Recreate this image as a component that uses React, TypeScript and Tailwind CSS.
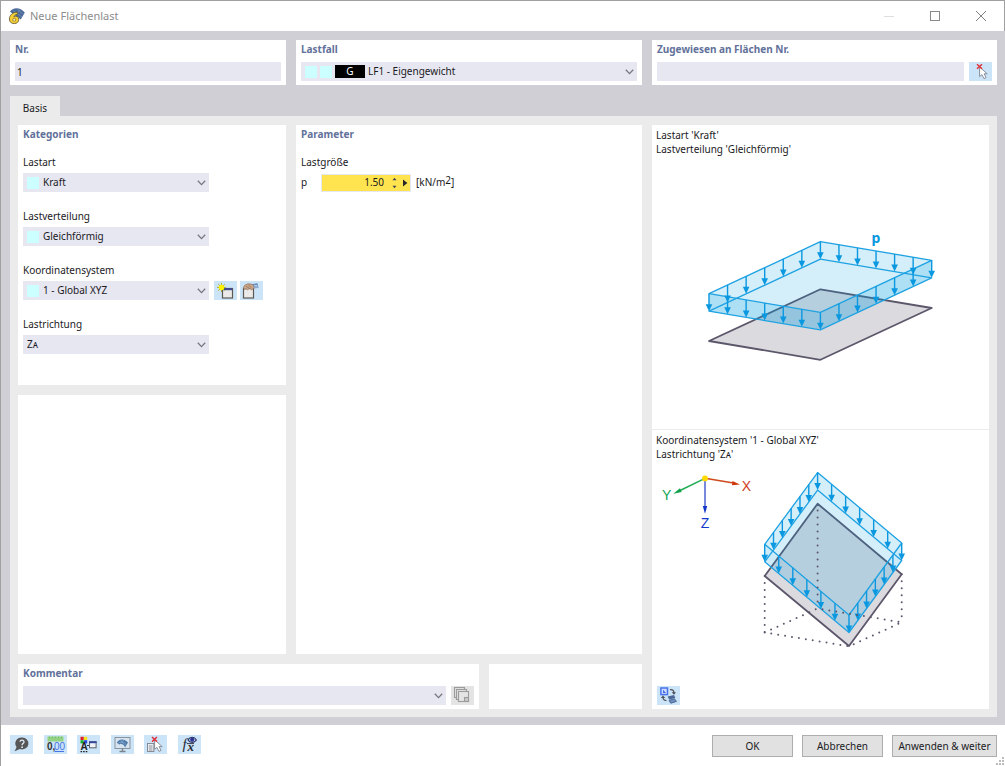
import React, { useState } from 'react';

type Pt = [number, number];

const pts = (list: Pt[]) => list.map((p) => p.join(',')).join(' ');
const down = (p: Pt, by: number): Pt => [p[0], p[1] + by];

function alongEdges(corners: Pt[], steps: number): Pt[] {
  const out: Pt[] = [];
  corners.forEach((a, i) => {
    const b = corners[(i + 1) % corners.length];
    for (let k = 0; k < steps; k++) {
      out.push([a[0] + ((b[0] - a[0]) * k) / steps, a[1] + ((b[1] - a[1]) * k) / steps]);
    }
  });
  return out;
}

function LoadArrow({ at }: { at: Pt }) {
  const [x, y] = at;
  return (
    <g>
      <line x1={x} y1={y} x2={x} y2={y + 12} stroke="#0a98e0" strokeWidth="1.4" />
      <polygon points={pts([[x - 3.3, y + 10.5], [x + 3.3, y + 10.5], [x, y + 17.5]])} fill="#0a98e0" />
    </g>
  );
}

/** Load prism: corners are given in the order left, top, right, front. */
function LoadPrism({ corners, wallOpacity }: { corners: Pt[]; wallOpacity: number }) {
  const h = 17.5;
  const [l, t, r, f] = corners;
  const low = corners.map((c) => down(c, h));
  return (
    <g>
      <polygon points={pts([l, t, r, low[2], low[3], low[0]])} fill="#0099e0" fillOpacity="0.17" />
      <polygon points={pts([l, f, low[3], low[0]])} fill="#0099e0" fillOpacity={wallOpacity} />
      <polygon points={pts([f, r, low[2], low[3]])} fill="#0099e0" fillOpacity={wallOpacity} />
      <g fill="none" stroke="#1ea2e2" strokeWidth="1.3" strokeLinejoin="round">
        <polygon points={pts(corners)} />
        <polygon points={pts(low)} />
      </g>
      {alongEdges(corners, 6).map((p, i) => (
        <LoadArrow key={i} at={p} />
      ))}
    </g>
  );
}

function DistributionDrawing() {
  const load: Pt[] = [[709, 293.7], [820.4, 241.7], [931.7, 260.3], [820.4, 312.3]];
  const plane: Pt[] = [[709, 341], [820.4, 289.3], [931.7, 308], [820.4, 359.8]];
  return (
    <svg width="336" height="273" viewBox="652 156 336 273" role="img" aria-label="Lastverteilung">
      <polygon points={pts(plane)} fill="#dbdadf" stroke="#5d576b" strokeWidth="1.8" strokeLinejoin="round" />
      <LoadPrism corners={load} wallOpacity={0.18} />
      <text x="871.5" y="243" fontSize="14" fontWeight="700" fill="#0a98e0" fontFamily="Noto Sans, sans-serif">p</text>
    </svg>
  );
}

function DirectionDrawing() {
  const load: Pt[] = [[764.7, 544.3], [817.6, 472.6], [901.7, 543], [849, 615]];
  const plane: Pt[] = [[764.7, 576], [817.6, 503.7], [901.7, 574.3], [849, 646]];
  return (
    <svg width="336" height="200" viewBox="652 461 336 200" role="img" aria-label="Lastrichtung">
      <polygon points={pts(plane)} fill="#dbdadf" stroke="#5d576b" strokeWidth="1.8" strokeLinejoin="round" />
      <LoadPrism corners={load} wallOpacity={0.03} />
      <g fill="none" stroke="#5d576b" strokeWidth="2" strokeLinecap="round" strokeDasharray="0 7">
        <path d="M817.6 510.5V607" />
        <path d="M764.7 576V632.5" />
        <path d="M901.7 574.3V622.3" />
        <path d="M764.7 632.5L817.6 608.5L901.7 622.3L849 646.3Z" />
      </g>
      <g strokeWidth="1.5">
        <path d="M705 478.3L735 483.3" stroke="#d0491c" />
        <path d="M705 478.3L678 491.5" stroke="#22aa55" />
        <path d="M705 478.3V508" stroke="#4a62d0" />
      </g>
      <polygon points="740,484.4 732.5,481 732,485.2" fill="#cf3a0c" />
      <polygon points="673.3,493.7 680,488.2 681.6,492" fill="#10a24a" />
      <polygon points="702.8,506 707.2,506 705,513.8" fill="#1035c8" />
      <circle cx="705" cy="478.4" r="2.9" fill="#ffd900" />
      <g fontSize="14" fontFamily="Liberation Sans, sans-serif" textAnchor="middle">
        <text x="746.3" y="490.5" fill="#d0401a">X</text>
        <text x="666.7" y="499.8" fill="#14a552">Y</text>
        <text x="705" y="528" fill="#1338cc">Z</text>
      </g>
    </svg>
  );
}

function Chevron() {
  return (
    <svg width="9" height="6" viewBox="0 0 9 6" className="pointer-events-none absolute top-[7px] right-[3px]" aria-hidden="true">
      <path d="M0.8 0.8L4.5 4.6L8.2 0.8" fill="none" stroke="#77767e" strokeWidth="1.3" />
    </svg>
  );
}

function Swatch() {
  return <span className="size-3 bg-[#ccffff]" />;
}

function Dropdown({ id, options, className, lead, label }: {
  id: string; options: string[]; className: string; lead?: React.ReactNode; label?: string;
}) {
  return (
    <div className="relative min-w-0 flex-1 bg-[#e7e7f1]">
      {lead && <div className="pointer-events-none absolute inset-y-0 left-1 flex items-center gap-[3px]">{lead}</div>}
      <select id={id} aria-label={label} className={'block h-[19px] w-full appearance-none bg-transparent pr-4 leading-[19px] outline-none ' + className}>
        {options.map((o) => (
          <option key={o}>{o}</option>
        ))}
      </select>
      <Chevron />
    </div>
  );
}

function Title({ children, htmlFor }: { children: React.ReactNode; htmlFor?: string }) {
  const cls = 'block leading-[18px] font-bold text-[#62719a]';
  return htmlFor ? <label htmlFor={htmlFor} className={cls}>{children}</label> : <h2 className={cls}>{children}</h2>;
}

function IconButton({ label, children, disabled }: { label: string; children: React.ReactNode; disabled?: boolean }) {
  return (
    <button
      type="button"
      aria-label={label}
      disabled={disabled}
      className="flex h-[19px] w-[23px] shrink-0 items-center justify-center bg-[#cce4f7] disabled:bg-[#e4e4e4]"
    >
      <svg width="23" height="19" viewBox="0 0 23 19" aria-hidden="true">{children}</svg>
    </button>
  );
}

function Cursor() {
  return <path d="M0 0V9.6L2.3 7.6L4.4 11.6L6.5 10.6L4.5 6.8H7.6Z" fill="#fff" stroke="#808590" strokeWidth="0.9" strokeLinejoin="round" />;
}

function RedCross() {
  return <path d="M0 0L5 4.6M5 0L0 4.6" stroke="#e0333c" strokeWidth="1.5" fill="none" />;
}

function SelectIcon() {
  return (
    <>
      <g transform="translate(10.6 5)"><Cursor /></g>
      <g transform="translate(8 2.2)"><RedCross /></g>
    </>
  );
}

function NewIcon() {
  return (
    <>
      <rect x="8.5" y="7.5" width="10" height="9.5" fill="#eceae8" stroke="#5c5a57" strokeWidth="1.2" />
      <rect x="9" y="7.2" width="9.2" height="2" fill="#3d4a94" />
      <path d="M7.5 1.8V11M3 6.4H12M4.2 3.1L10.8 9.7M10.8 3.1L4.2 9.7" stroke="#a9a920" strokeWidth="0.9" />
      <circle cx="7.5" cy="6.4" r="2.7" fill="#fff200" />
    </>
  );
}

function EditIcon() {
  return (
    <>
      <rect x="3.5" y="7.5" width="10" height="9.5" fill="#eceae8" stroke="#5c5a57" strokeWidth="1.2" />
      <path d="M3.4 6.5C4 4.2 6.5 2.8 9 2.8L13 3.6L14.5 7L11.4 8.8L9.8 7.4L7.4 8.8L6 7.8L4.2 8.4Z" fill="#cda689" stroke="#866a57" strokeWidth="0.7" />
      <path d="M6 5.3L9 7M8.5 4.3L11.4 6.4" stroke="#866a57" strokeWidth="0.7" />
      <path d="M12.8 3L17.5 2.2L18.5 7L14.4 7.2Z" fill="#5d86b8" />
      <path d="M14 4.4H17.5M14.3 6H18" stroke="#d5e6f7" strokeWidth="0.8" />
    </>
  );
}

function CopyIcon() {
  return (
    <g fill="#e4e4e4" stroke="#9c9c9c" strokeWidth="1.1">
      <rect x="3.5" y="1.5" width="10" height="10" />
      <rect x="5.5" y="3.5" width="10" height="10" />
      <rect x="7.5" y="5.5" width="10" height="10" />
      <rect x="13.5" y="11.5" width="4" height="4" fill="#c8c8c8" />
    </g>
  );
}

function SwitchViewIcon() {
  return (
    <>
      <rect x="3.9" y="2" width="6.6" height="6.6" fill="#cfdcff" stroke="#4a73ea" strokeWidth="1.5" />
      <path d="M6 3.8V7H9Z" fill="#3f6ae8" />
      <path d="M13 3.6C15.5 3.2 17 4.5 17 7" fill="none" stroke="#4c5058" strokeWidth="1.2" />
      <path d="M14.6 6.2H19L17 8.8Z" fill="#4c5058" />
      <path d="M9.4 14.6C7.2 14.4 6 13.4 6 11.6" fill="none" stroke="#4c5058" strokeWidth="1.2" />
      <path d="M3.8 12H8.2L6 9.4Z" fill="#4c5058" />
      <path d="M10.6 10.4L17 9L18.4 12L12.2 13.6Z" fill="#4a6796" />
      <path d="M12 14.4L17.4 12.8L19.4 15.4L13.8 17.2Z" fill="#6f8fc0" stroke="#4a6796" strokeWidth="1" />
    </>
  );
}

function HelpIcon() {
  return (
    <>
      <path d="M12 2.4A6.2 6 0 1 1 10 14L4.6 16.2L6.6 12A6.2 6 0 0 1 12 2.4Z" fill="#575757" />
      <path d="M10 6.8C10.2 4.6 14.2 4.7 14 7C13.9 8.4 12.1 8.3 12.1 10.2" fill="none" stroke="#e4eff8" strokeWidth="1.3" />
      <circle cx="12.1" cy="12.2" r="0.9" fill="#e4eff8" />
    </>
  );
}

function UnitsIcon() {
  return (
    <>
      <rect x="3.5" y="1.5" width="16" height="5" fill="#93d383" />
      <path d="M5.5 1.5V3.4M8.5 1.5V3.4M11.5 1.5V3.4M14.5 1.5V3.4M17.5 1.5V3.4" stroke="#6fb865" strokeWidth="0.7" />
      <text x="3" y="14.8" fontSize="10" fontWeight="700" fill="#333" fontFamily="Liberation Sans, sans-serif">0,</text>
      <text x="10" y="14.8" fontSize="10" fill="#4575e4" fontFamily="Liberation Sans, sans-serif">00</text>
      <path d="M10.5 16.5H20" stroke="#4575e4" />
    </>
  );
}

function DisplayIcon() {
  return (
    <>
      <rect x="3.5" y="1.8" width="3.2" height="3.2" fill="#e02020" />
      <rect x="7" y="1.8" width="3.2" height="3.2" fill="#f3e21a" />
      <rect x="3.5" y="5.2" width="3.2" height="3.2" fill="#18b030" />
      <rect x="7" y="5.2" width="3.2" height="3.2" fill="#2848d8" />
      <text x="3.4" y="14.8" fontSize="10" fontWeight="700" fill="#222" fontFamily="Liberation Sans, sans-serif">A</text>
      <path d="M3.5 16.6H11" stroke="#222" strokeWidth="1.2" strokeDasharray="1.6 1" />
      <path d="M10 10.5H12.4" stroke="#333" />
      <rect x="12.5" y="6.8" width="6.6" height="6" fill="#eef1f5" stroke="#5b5f68" strokeWidth="1" />
      <rect x="12" y="6.3" width="7.6" height="1.9" fill="#34479b" />
    </>
  );
}

function MonitorIcon() {
  return (
    <>
      <rect x="4" y="2.5" width="15" height="11" fill="#d5e4f0" stroke="#8b939b" />
      <path d="M11.5 13.5V16M8.5 16.5H14.5" stroke="#7b838b" strokeWidth="1.4" />
      <path d="M5.8 7.8C7.4 3.8 13 3 17 7.4L14 12.4C13.4 9.8 10.8 8.2 8.2 9.4Z" fill="#4f7aa8" />
      <path d="M7 8.4C10 6 13.6 6.8 15.4 10M9.4 4.8L13 9.4M13 4.8L9.4 8.6" stroke="#8eb0d2" strokeWidth="0.6" fill="none" />
    </>
  );
}

function PickDataIcon() {
  return (
    <>
      <rect x="3.5" y="8.5" width="6.4" height="8" fill="#e6eaee" stroke="#7d828a" strokeWidth="0.9" />
      <path d="M5 11H8.4M5 13H8.4M5 15H8.4" stroke="#7d828a" strokeWidth="0.8" />
      <g transform="translate(10.6 4.8)"><Cursor /></g>
      <g transform="translate(8 2)"><RedCross /></g>
    </>
  );
}

function FormulaIcon() {
  return (
    <>
      <text x="4.5" y="14" fontSize="15" fontStyle="italic" fill="#262a33" fontFamily="Liberation Serif, serif">f</text>
      <text x="9.4" y="15.6" fontSize="13" fontStyle="italic" fontWeight="700" fill="#262a33" fontFamily="Liberation Serif, serif">x</text>
      <path d="M8.8 8.6H16" stroke="#262a33" strokeWidth="0.9" />
      <path d="M10 5C12 1.4 16.4 1.4 18.4 5C16.4 8.2 12 8.2 10 5Z" fill="#c9d3f0" stroke="#252c66" strokeWidth="1.1" />
      <circle cx="14.2" cy="4.6" r="2.1" fill="#2b3690" />
    </>
  );
}

function AppIcon() {
  return (
    <svg width="18" height="18" viewBox="0 0 18 18" aria-hidden="true">
      <path d="M2 4.8C4.4 0.4 12 -0.6 16.8 5.6L12.8 12.6L8 9Z" fill="#4c6b99" />
      <path d="M5 3.4L14 10M9 1.8L15.4 7.4M12.6 2.6L7.6 8" stroke="#89a5cb" strokeWidth="0.5" />
      <path d="M9.4 5.2C4.6 5 1.4 8.4 1.4 12C1.4 14.8 3.2 16.6 6.2 16.6C9 16.6 10.8 14.8 10.8 12.4C10.8 9.8 8.2 8.6 5.8 9.6C6.4 8.2 7.6 7.6 9.4 7.6Z" fill="#f5cf33" stroke="#5e5630" strokeWidth="0.8" />
      <circle cx="6.3" cy="12.7" r="1.5" fill="#f7eec0" stroke="#8a7420" strokeWidth="0.8" />
    </svg>
  );
}

function PushButton({ children, wide }: { children: React.ReactNode; wide?: boolean }) {
  return (
    <button
      type="button"
      className={'h-[22px] border border-[#adadad] bg-[#e1e1e1] text-center leading-5 whitespace-nowrap ' + (wide ? 'w-[105px]' : 'w-[81px]')}
    >
      {children}
    </button>
  );
}

function Field({ id, label, children }: { id: string; label: string; children: React.ReactNode }) {
  return (
    <div className="flex flex-col gap-[3px]">
      <label htmlFor={id} className="leading-4">{label}</label>
      {children}
    </div>
  );
}

export default function App() {
  const [nr, setNr] = useState('1');
  const [surfaces, setSurfaces] = useState('');
  const [load, setLoad] = useState('1.50');

  return (
    <div className="relative flex min-h-screen flex-col border-t border-l border-[#a0a0a0] bg-white font-['Noto_Sans','Open_Sans',sans-serif] text-[10px] text-[#1a1a1e]">
      <header className="flex h-[30px] items-center border-r border-[#a0a0a0] pr-[17px] pl-[7px]">
        <AppIcon />
        <h1 className="flex-1 pl-1 text-[11px] text-[#8c8c8c]">Neue Flächenlast</h1>
        <div className="flex items-center gap-[34px]">
          <button type="button" aria-label="Minimieren" disabled>
            <svg width="12" height="12" viewBox="0 0 12 12"><path d="M1 6.5H11" stroke="#dedede" /></svg>
          </button>
          <button type="button" aria-label="Maximieren">
            <svg width="12" height="12" viewBox="0 0 12 12"><rect x="1.5" y="1.5" width="9" height="9" fill="none" stroke="#8a8a8a" /></svg>
          </button>
          <button type="button" aria-label="Schließen">
            <svg width="12" height="12" viewBox="0 0 12 12"><path d="M1 1L11 11M11 1L1 11" stroke="#808080" /></svg>
          </button>
        </div>
      </header>

      <main className="flex flex-1 flex-col bg-[#d0cfd5] pt-[9px] pr-2 pb-2 pl-[9px]">
        <div className="grid grid-cols-[276fr_346fr_345fr] gap-2.5">
          <section className="bg-white px-[5px] pb-1">
            <Title htmlFor="nr">Nr.</Title>
            <input id="nr" value={nr} onChange={(e) => setNr(e.target.value)} className="mt-1 block h-[19px] w-full bg-[#e7e7f1] px-0.5 outline-none" />
          </section>
          <section className="bg-white px-[5px] pb-1">
            <Title htmlFor="lastfall">Lastfall</Title>
            <div className="mt-1 flex">
              <Dropdown
                id="lastfall"
                options={['LF1 - Eigengewicht']}
                className="pl-[67px]"
                lead={
                  <>
                    <Swatch />
                    <Swatch />
                    <span className="h-[13px] w-[30px] bg-black text-center leading-[13px] text-white">G</span>
                  </>
                }
              />
            </div>
          </section>
          <section className="bg-white px-[5px] pb-1">
            <Title htmlFor="flaechen">Zugewiesen an Flächen Nr.</Title>
            <div className="mt-1 flex gap-[5px]">
              <input id="flaechen" value={surfaces} onChange={(e) => setSurfaces(e.target.value)} className="h-[19px] min-w-0 flex-1 bg-[#e7e7f1] px-0.5 outline-none" />
              <IconButton label="Flächen auswählen"><SelectIcon /></IconButton>
            </div>
          </section>
        </div>

        <div role="tablist" className="mt-[11px] flex">
          <button type="button" role="tab" aria-selected="true" className="h-5 w-[50px] bg-[#ebebeb] pt-1 leading-4">Basis</button>
        </div>

        <div role="tabpanel" className="grid flex-1 grid-cols-[624fr_337fr] gap-2.5 bg-[#ebebeb] px-2 pt-[9px] pb-2">
          <div className="flex flex-col gap-2.5">
            <div className="grid flex-1 grid-cols-[268fr_346fr] gap-2.5">
              <div className="flex flex-col gap-2.5">
                <section className="flex flex-col bg-white px-[5px] pb-[31px]">
                  <Title>Kategorien</Title>
                  <div className="mt-[11px] grid grid-cols-[186px_1fr] gap-x-[5px] gap-y-4">
                    <Field id="lastart" label="Lastart">
                      <div className="flex"><Dropdown id="lastart" options={['Kraft']} className="pl-5" lead={<Swatch />} /></div>
                    </Field>
                    <div className="col-start-1">
                      <Field id="verteilung" label="Lastverteilung">
                        <div className="flex"><Dropdown id="verteilung" options={['Gleichförmig']} className="pl-5" lead={<Swatch />} /></div>
                      </Field>
                    </div>
                    <div className="col-start-1">
                      <Field id="koord" label="Koordinatensystem">
                        <div className="flex"><Dropdown id="koord" options={['1 - Global XYZ']} className="pl-5" lead={<Swatch />} /></div>
                      </Field>
                    </div>
                    <div className="flex items-end gap-[3px]">
                      <IconButton label="Neues Koordinatensystem"><NewIcon /></IconButton>
                      <IconButton label="Koordinatensystem bearbeiten"><EditIcon /></IconButton>
                    </div>
                    <div className="col-start-1">
                      <Field id="richtung" label="Lastrichtung">
                        <div className="flex"><Dropdown id="richtung" options={['Zᴀ']} className="pl-1" /></div>
                      </Field>
                    </div>
                  </div>
                </section>
                <section className="flex-1 bg-white" />
              </div>

              <section className="bg-white px-[5px]">
                <Title>Parameter</Title>
                <h3 className="mt-[11px] leading-4">Lastgröße</h3>
                <div className="mt-[3px] flex h-[19px] items-center">
                  <label htmlFor="last-p" className="w-5">p</label>
                  <div className="flex h-[18px] w-[90px] items-center gap-2 border border-[#e7e7f1] bg-[#ffe44f] pr-0.5">
                    <input id="last-p" value={load} onChange={(e) => setLoad(e.target.value)} className="min-w-0 flex-1 bg-transparent text-right outline-none" />
                    <svg width="16" height="12" viewBox="0 0 16 12" aria-hidden="true">
                      <path d="M0.5 3.2L2.5 0.8L4.5 3.2Z" fill="#44444c" />
                      <path d="M0.5 8.8L2.5 11.2L4.5 8.8Z" fill="#44444c" />
                      <path d="M11 2.5V9.5L15.4 6Z" fill="#26262c" />
                    </svg>
                  </div>
                  <span className="pl-[5px]">[kN/m<span className="relative -top-0.5">2</span>]</span>
                </div>
              </section>
            </div>

            <div className="grid grid-cols-[461fr_153fr] gap-2.5">
              <section className="bg-white px-[5px] pb-1">
                <Title htmlFor="kommentar">Kommentar</Title>
                <div className="mt-1 flex gap-[5px]">
                  <Dropdown id="kommentar" options={['']} className="pl-1" />
                  <IconButton label="Kommentar übernehmen" disabled><CopyIcon /></IconButton>
                </div>
              </section>
              <section className="bg-white" />
            </div>
          </div>

          <section className="flex flex-col bg-white pt-[3px] pb-1">
            <p className="px-1 leading-[14px]">Lastart 'Kraft'<br />Lastverteilung 'Gleichförmig'</p>
            <DistributionDrawing />
            <div className="border-t border-[#ebebeb] px-1 pt-[3px] leading-[14px]">
              <p>Koordinatensystem '1 - Global XYZ'</p>
              <p>Lastrichtung 'Zᴀ'</p>
            </div>
            <DirectionDrawing />
            <div className="mt-auto pl-[5px]">
              <IconButton label="Ansicht wechseln"><SwitchViewIcon /></IconButton>
            </div>
          </section>
        </div>
      </main>

      <footer className="flex h-[41px] items-start justify-between pt-2.5 pr-2 pl-[9px]">
        <div className="flex w-[191px] justify-between">
          <IconButton label="Hilfe"><HelpIcon /></IconButton>
          <IconButton label="Einheiten und Dezimalstellen"><UnitsIcon /></IconButton>
          <IconButton label="Anzeigeeigenschaften"><DisplayIcon /></IconButton>
          <IconButton label="Ansicht"><MonitorIcon /></IconButton>
          <IconButton label="Daten übernehmen"><PickDataIcon /></IconButton>
          <IconButton label="Formel"><FormulaIcon /></IconButton>
        </div>
        <div className="flex gap-[9px]">
          <PushButton>OK</PushButton>
          <PushButton>Abbrechen</PushButton>
          <PushButton wide>Anwenden &amp; weiter</PushButton>
        </div>
      </footer>
      <svg width="10" height="10" viewBox="0 0 10 10" className="absolute right-0 bottom-0" aria-hidden="true">
        <path d="M7 1h2v2h-2zM4 4h2v2h-2zM7 4h2v2h-2zM1 7h2v2h-2zM4 7h2v2h-2zM7 7h2v2h-2z" fill="#bcbcbc" />
      </svg>
    </div>
  );
}
